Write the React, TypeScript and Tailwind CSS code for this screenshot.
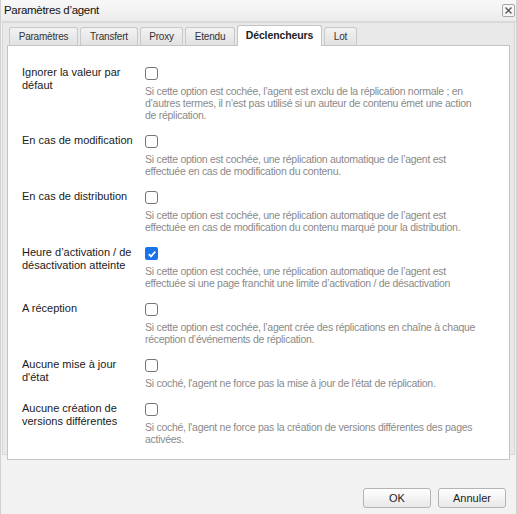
import React from "react";

const rows: { label: string; desc: string[]; checked?: boolean }[] = [
  {
    label: "Ignorer la valeur par défaut",
    desc: [
      "Si cette option est cochée, l’agent est exclu de la réplication normale ; en",
      "d’autres termes, il n’est pas utilisé si un auteur de contenu émet une action",
      "de réplication.",
    ],
  },
  {
    label: "En cas de modification",
    desc: [
      "Si cette option est cochée, une réplication automatique de l’agent est",
      "effectuée en cas de modification du contenu.",
    ],
  },
  {
    label: "En cas de distribution",
    desc: [
      "Si cette option est cochée, une réplication automatique de l’agent est",
      "effectuée en cas de modification du contenu marqué pour la distribution.",
    ],
  },
  {
    label: "Heure d’activation / de désactivation atteinte",
    checked: true,
    desc: [
      "Si cette option est cochée, une réplication automatique de l’agent est",
      "effectuée si une page franchit une limite d’activation / de désactivation",
    ],
  },
  {
    label: "A réception",
    desc: [
      "Si cette option est cochée, l’agent crée des réplications en chaîne à chaque",
      "réception d’événements de réplication.",
    ],
  },
  {
    label: "Aucune mise à jour d'état",
    desc: ["Si coché, l'agent ne force pas la mise à jour de l'état de réplication."],
  },
  {
    label: "Aucune création de versions différentes",
    desc: [
      "Si coché, l'agent ne force pas la création de versions différentes des pages",
      "activées.",
    ],
  },
];

const tabs = [
  { name: "Paramètres", w: "w-[69px]" },
  { name: "Transfert", w: "w-[58px]" },
  { name: "Proxy", w: "w-[43px]" },
  { name: "Etendu", w: "w-[50px]" },
  { name: "Déclencheurs", w: "w-[85px]", active: true },
  { name: "Lot", w: "w-[33px]" },
];

function Checkbox({ checked }: { checked?: boolean }) {
  if (checked) {
    return (
      <div className="w-[13px] h-[13px] rounded-[2px] bg-[#1a73e8] flex items-center justify-center">
        <svg width="10" height="10" viewBox="0 0 10 10">
          <path d="M1.8 5.2 L4 7.4 L8.3 2.6" fill="none" stroke="#fff" strokeWidth="1.7" />
        </svg>
      </div>
    );
  }
  return <div className="w-[13px] h-[13px] rounded-[3px] border border-[#767676] bg-white" />;
}

export default function App() {
  return (
    <div
      className="w-[517px] h-[514px] bg-[#f2f2f2] border-x border-[#d0d0d0] flex flex-col overflow-hidden text-[#222]"
      style={{ fontFamily: '"Liberation Sans", Arial, sans-serif' }}
    >
      <div className="h-[22px] shrink-0 flex items-center justify-between pl-[3px] pr-[1px] bg-gradient-to-b from-[#f8f8f8] to-[#ececec] border-b border-[#dadada]">
        <span className="text-[11.5px] tracking-[-0.3px] text-[#111]">Paramètres d’agent</span>
        <div className="w-[13px] h-[13px] border border-[#a8a8a8] rounded-[2px] bg-[#f6f6f6] flex items-center justify-center">
          <svg width="9" height="9" viewBox="0 0 9 9">
            <path d="M1.5 1.5 L7.5 7.5 M7.5 1.5 L1.5 7.5" stroke="#555" strokeWidth="1.3" />
          </svg>
        </div>
      </div>
      <div className="mx-[1px] border border-[#d8d8d8] bg-[#e9e9e9] px-[4px] pb-[2px] h-[433px] flex flex-col">
        <div className="flex items-end gap-[2px] pl-[2px] h-[22px] shrink-0">
          {tabs.map((t) =>
            t.active ? (
              <div
                key={t.name}
                className={`${t.w} h-[21px] -mb-px relative z-10 bg-white border border-b-0 border-[#c4c4c4] rounded-t-[3px] flex items-center justify-center text-[10.5px] tracking-[-0.1px] font-bold text-[#222]`}
              >
                {t.name}
              </div>
            ) : (
              <div
                key={t.name}
                className={`${t.w} h-[18px] bg-gradient-to-b from-[#f2f2f2] to-[#e2e2e2] border border-b-0 border-[#c8c8c8] rounded-t-[3px] flex items-center justify-center text-[10px] tracking-[-0.2px] text-[#333]`}
              >
                {t.name}
              </div>
            )
          )}
        </div>
        <div className="flex-1 bg-white border border-[#c4c4c4] pl-[14px] pt-[21px]">
          {rows.map((r) => (
            <div key={r.label} className="flex mb-[14px]">
              <div className="w-[123px] shrink-0 text-[11px] leading-[13px] -mt-px pr-[6px] text-[#1a1a1a]">{r.label}</div>
              <div className="flex flex-col">
                <Checkbox checked={r.checked} />
                <div className="mt-[5px] text-[10.5px] tracking-[-0.28px] leading-[12px] text-[#8a8a8a]">
                  {r.desc.map((d, i) => (
                    <div key={i} className="whitespace-nowrap">{d}</div>
                  ))}
                </div>
              </div>
            </div>
          ))}
        </div>
      </div>
      <div className="flex justify-end gap-[7px] pr-[10px] pt-[33px]">
        {["OK", "Annuler"].map((b) => (
          <div
            key={b}
            className="w-[68px] h-[20px] rounded-[3px] border border-[#b4b4b4] bg-gradient-to-b from-[#ffffff] to-[#e8e8e8] flex items-center justify-center text-[11px] text-[#222]"
          >
            {b}
          </div>
        ))}
      </div>
    </div>
  );
}
